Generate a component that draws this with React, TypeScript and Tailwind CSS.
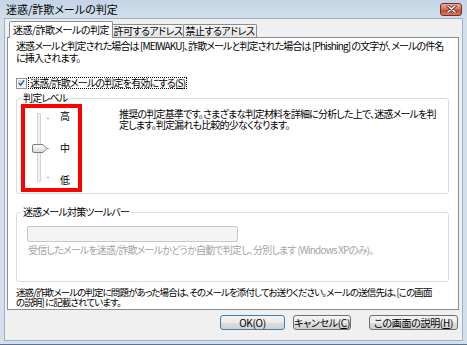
import React from "react";

function CloseButton() {
  return (
    <div className="w-[22px] h-[13px] rounded-[3px] border border-[#6d2f24] bg-[linear-gradient(#eab0a2,#d86a55_50%,#c4412a_51%,#db7a60)] flex items-center justify-center">
      <svg width="11" height="8" viewBox="0 0 11 8">
        <path d="M2 1 L9 7 M9 1 L2 7" stroke="#6a2a20" strokeWidth="3" strokeLinecap="round" />
        <path d="M2 1 L9 7 M9 1 L2 7" stroke="#ffffff" strokeWidth="1.6" strokeLinecap="round" />
      </svg>
    </div>
  );
}

function Checkbox() {
  return (
    <div className="w-[11px] h-[11px] border border-[#8f8f8f] bg-white p-[1px] shrink-0">
      <div className="w-full h-full bg-[linear-gradient(135deg,#d4d4d4,#f8f8f8)] flex items-center justify-center">
        <svg width="8" height="8" viewBox="0 0 8 8">
          <path d="M1 4 L3 6.5 L7 1" stroke="#2f4fa8" strokeWidth="1.5" fill="none" />
        </svg>
      </div>
    </div>
  );
}

function Thumb() {
  return (
    <svg width="16" height="9" viewBox="0 0 16 9">
      <defs>
        <linearGradient id="tg" x1="0" y1="0" x2="0" y2="1">
          <stop offset="0" stopColor="#ffffff" />
          <stop offset="1" stopColor="#d6d6d6" />
        </linearGradient>
      </defs>
      <path
        d="M0.5 2 Q0.5 0.5 2 0.5 H11 L15 4.5 L11 8.5 H2 Q0.5 8.5 0.5 7 Z"
        fill="url(#tg)"
        stroke="#7b7b7b"
      />
    </svg>
  );
}

function Button({ children, primary }: { children: React.ReactNode; primary?: boolean }) {
  return (
    <div
      className={
        "h-[15px] rounded-[3px] border flex items-center justify-center whitespace-nowrap text-[10px] leading-[12px] bg-[linear-gradient(#f4f4f4,#ebebeb_50%,#dcdcdc_51%,#d2d2d2)] " +
        (primary ? "border-[#3c7fb1]" : "border-[#707070]")
      }
    >
      {children}
    </div>
  );
}

export default function App() {
  return (
    <div className="w-[467px] h-[345px] bg-[linear-gradient(#c4d4e6,#d3dfeb_20px,#d3dfeb)] border-b border-[#5d718a] flex flex-col overflow-hidden text-black text-[10px] leading-[12px] tracking-[-0.8px] font-['Noto_Sans_CJK_JP','Noto_Sans',sans-serif] [font-feature-settings:'palt']">
      {/* title bar */}
      <div className="h-[18px] shrink-0 flex items-center justify-between pl-[6px] pr-[5px]">
        <span className="text-[11px] leading-[12px] tracking-normal whitespace-nowrap">迷惑/詐欺メールの判定</span>
        <CloseButton />
      </div>

      {/* client area */}
      <div className="mx-[4px] mb-[3px] flex-1 bg-[#f0f0f0] border border-[#9fb1c5] pl-[2px] pr-[3px] flex flex-col">
        {/* tabs */}
        <div className="mt-[2px] flex items-end pl-[2px] relative z-10 tracking-[-0.5px]">
          <div className="w-[104px] h-[17px] -mb-px bg-white border border-b-0 border-[#898c95] rounded-t-[2px] flex items-center justify-center whitespace-nowrap">
            迷惑/詐欺メールの判定
          </div>
          <div className="w-[71px] h-[13px] bg-[linear-gradient(#f6f6f6,#e4e4e4)] border border-b-0 border-l-0 border-[#898c95] rounded-tr-[2px] flex items-center justify-center whitespace-nowrap">
            許可するアドレス
          </div>
          <div className="w-[73px] h-[13px] bg-[linear-gradient(#f6f6f6,#e4e4e4)] border border-b-0 border-l-0 border-[#898c95] rounded-tr-[2px] flex items-center justify-center whitespace-nowrap">
            禁止するアドレス
          </div>
        </div>

        {/* panel */}
        <div className="h-[273px] shrink-0 min-w-0 bg-white border border-[#898c95] pl-[8px] pr-[9px] pt-[2px] flex flex-col">
          <p className="whitespace-nowrap tracking-[-0.9px]">
            迷惑メールと判定された場合は [MEIWAKU]、詐欺メールと判定された場合は [Phishing] の文字が、メールの件名
          </p>
          <p className="whitespace-nowrap">に挿入されます。</p>

          <div className="mt-[13px] h-[12px] flex items-center">
            <Checkbox />
            <span className="ml-[1px] px-[1px] border border-dotted border-black whitespace-nowrap leading-[10px]">
              迷惑/詐欺メールの判定を有効にする(<u>S</u>)
            </span>
          </div>

          {/* group 1 */}
          <fieldset className="min-w-0 mt-[3px] border border-[#d5dfe5] rounded-[3px] pl-[4px] pb-[1px]">
            <legend className="px-[2px] leading-[12px]">判定レベル</legend>
            <div className="flex items-start">
              <div className="w-[61px] h-[88px] border-[4px] border-[#ff0000] shrink-0 flex">
                {/* slider */}
                <div className="relative w-[22px] h-full">
                  <div className="absolute left-[12px] top-[5px] w-[4px] h-[69px] border border-[#d4d4d4] bg-[#f2f2f2] rounded-[1px]" />
                  <div className="absolute left-[7px] top-[36px]">
                    <Thumb />
                  </div>
                </div>
                <div className="w-[6px] h-full flex flex-col pt-[10px]">
                  <div className="w-[2px] h-[1px] bg-[#a8a8a8]" />
                  <div className="w-[2px] h-[1px] bg-[#a8a8a8] mt-[29px]" />
                  <div className="w-[2px] h-[1px] bg-[#a8a8a8] mt-[28px]" />
                </div>
                <div className="ml-[7px] flex flex-col justify-between pt-[2px] pb-[2px] h-full">
                  <span>高</span>
                  <span>中</span>
                  <span>低</span>
                </div>
              </div>
              <div className="ml-[37px] mt-[4px] leading-[11px] whitespace-nowrap">
                <p>推奨の判定基準です。さまざまな判定材料を詳細に分析した上で、迷惑メールを判</p>
                <p>定します。判定漏れも比較的少なくなります。</p>
              </div>
            </div>
          </fieldset>

          {/* group 2 */}
          <fieldset className="min-w-0 mt-[12px] border border-[#d5dfe5] rounded-[3px] pl-[4px] pb-[25px]">
            <legend className="px-[2px] leading-[12px]">迷惑メール対策ツールバー</legend>
            <div className="ml-[6px] mt-[8px] w-[211px] h-[16px] rounded-[2px] border border-[#c9c9c9] bg-[#f4f4f4]" />
            <p className="ml-[7px] mt-[2px] text-[#a3a3a3] whitespace-nowrap">
              受信したメールを迷惑/詐欺メールかどうか自動で判定し、分別します (Windows XPのみ)。
            </p>
          </fieldset>

          <div className="mt-[5px] text-[9.5px] leading-[10px] whitespace-nowrap tracking-[-0.9px]">
            <p>迷惑/詐欺メールの判定に問題があった場合は、そのメールを添付してお送りください。メールの送信先は、[この画面</p>
            <p>の説明] に記載されています。</p>
          </div>
        </div>

        {/* buttons */}
        <div className="mt-[5px] flex justify-end gap-[8px] pr-[1px] tracking-[-0.3px]">
          <div className="w-[65px]">
            <Button primary>OK(O)</Button>
          </div>
          <div className="w-[58px]">
            <Button>
              キャンセル(<u>C</u>)
            </Button>
          </div>
          <div className="w-[89px] ml-[10px]">
            <Button>
              この画面の説明(<u>H</u>)
            </Button>
          </div>
        </div>
      </div>
    </div>
  );
}
